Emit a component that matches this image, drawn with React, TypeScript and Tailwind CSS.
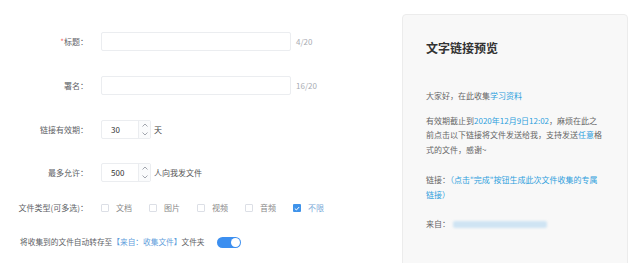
import React from "react";

const font = { fontFamily: '"Noto Sans CJK SC", "Noto Sans", sans-serif' };

function Label({ children }: { children: React.ReactNode }) {
  return <div className="w-[89px] shrink-0 text-right pr-[1px] text-[8px] text-[#606266]">{children}</div>;
}

function NumberBox({ value }: { value: string }) {
  return (
    <div className="flex h-[19px] w-[50px] rounded-[2px] border border-[#ebedf0] bg-white">
      <div className="flex flex-1 items-center pl-[9px] text-[8px] text-[#333]">{value}</div>
      <div className="flex w-[12px] flex-col border-l border-[#ebedf0] bg-[#fafbfc]">
        <div className="flex flex-1 items-center justify-center">
          <svg width="6" height="4" viewBox="0 0 6 4" fill="none" stroke="#8c9199" strokeWidth="0.8">
            <path d="M0.5 3.5 L3 1 L5.5 3.5" />
          </svg>
        </div>
        <div className="flex flex-1 items-center justify-center">
          <svg width="6" height="4" viewBox="0 0 6 4" fill="none" stroke="#8c9199" strokeWidth="0.8">
            <path d="M0.5 0.5 L3 3 L5.5 0.5" />
          </svg>
        </div>
      </div>
    </div>
  );
}

function Check({ label, checked }: { label: string; checked?: boolean }) {
  return (
    <div className="flex w-[48px] items-center gap-[7px]">
      {checked ? (
        <div className="flex h-[8px] w-[8px] items-center justify-center rounded-[1px] bg-[#3f93ea]">
          <svg width="6" height="5" viewBox="0 0 6 5" fill="none" stroke="white" strokeWidth="1">
            <path d="M0.8 2.5 L2.4 4 L5.2 1" />
          </svg>
        </div>
      ) : (
        <div className="h-[8px] w-[8px] rounded-[1px] border border-[#dcdfe6] bg-white" />
      )}
      <span className={`text-[8px] ${checked ? "text-[#7aa9d8]" : "text-[#888]"}`}>{label}</span>
    </div>
  );
}

export default function App() {
  const blue = "text-[#2ea0dd]";
  return (
    <div className="flex h-[263px] w-[640px] overflow-hidden bg-white" style={font}>
      {/* Form */}
      <div className="flex w-[402px] shrink-0 flex-col pt-[32px]">
        <div className="flex h-[19px] items-center">
          <Label>
            <span className="text-[#f56c6c]">*</span>标题：
          </Label>
          <div className="ml-[12px] h-[19px] w-[190px] rounded-[2px] border border-[#ebedf0]" />
          <span className="ml-[5px] text-[8px] text-[#a8abb2]">4/20</span>
        </div>
        <div className="mt-[25px] flex h-[19px] items-center">
          <Label>署名：</Label>
          <div className="ml-[12px] h-[19px] w-[190px] rounded-[2px] border border-[#ebedf0]" />
          <span className="ml-[5px] text-[8px] text-[#a8abb2]">16/20</span>
        </div>
        <div className="mt-[25px] flex h-[19px] items-center">
          <Label>链接有效期：</Label>
          <div className="ml-[12px]">
            <NumberBox value="30" />
          </div>
          <span className="ml-[3px] text-[8px] text-[#444]">天</span>
        </div>
        <div className="mt-[24px] flex h-[19px] items-center">
          <Label>最多允许：</Label>
          <div className="ml-[12px]">
            <NumberBox value="500" />
          </div>
          <span className="ml-[3px] text-[8px] text-[#555]">人向我发文件</span>
        </div>
        <div className="mt-[20px] flex h-[12px] items-center">
          <Label>文件类型(可多选)：</Label>
          <div className="ml-[12px] flex">
            <Check label="文档" />
            <Check label="图片" />
            <Check label="视频" />
            <Check label="音频" />
            <Check label="不限" checked />
          </div>
        </div>
        <div className="mt-[22px] flex h-[12px] items-center pl-[20px]">
          <span className="text-[7.7px] text-[#606266]">
            将收集到的文件自动转存至<span className="text-[#5fa0dc]">【来自：收集文件】</span>文件夹
          </span>
          <div className="ml-[12px] flex h-[11px] w-[24px] items-center justify-end rounded-full bg-[#3c8ff0] pr-[1px]">
            <div className="h-[9px] w-[9px] rounded-full bg-white" />
          </div>
        </div>
      </div>

      {/* Preview */}
      <div className="mt-[14px] h-[270px] w-[226px] rounded-[4px] border border-[#ececec] bg-[#f8f8f8] pl-[23px] pt-[24px]">
        <div className="text-[12px] font-bold leading-[18px] text-[#333]">文字链接预览</div>
        <div className="mt-[32px] text-[8px] leading-[14.5px] text-[#666]">
          <div>
            大家好，在此收集<span className={blue}>学习资料</span>
          </div>
          <div className="mt-[10px]">
            有效期截止到<span className={blue}>2020年12月9日12:02</span>，麻烦在此之
          </div>
          <div>
            前点击以下链接将文件发送给我，支持发送<span className={blue}>任意</span>格
          </div>
          <div>式的文件，感谢~</div>
          <div className="mt-[16px]">
            链接：<span className={blue}>（点击"完成"按钮生成此次文件收集的专属</span>
          </div>
          <div className={blue}>链接）</div>
          <div className="mt-[15px] flex items-center">
            <span>来自：</span>
            <div className="ml-[3px] h-[7px] w-[94px] rounded-[2px] bg-[#cfe4f3] blur-[1px]" />
          </div>
        </div>
      </div>
    </div>
  );
}
